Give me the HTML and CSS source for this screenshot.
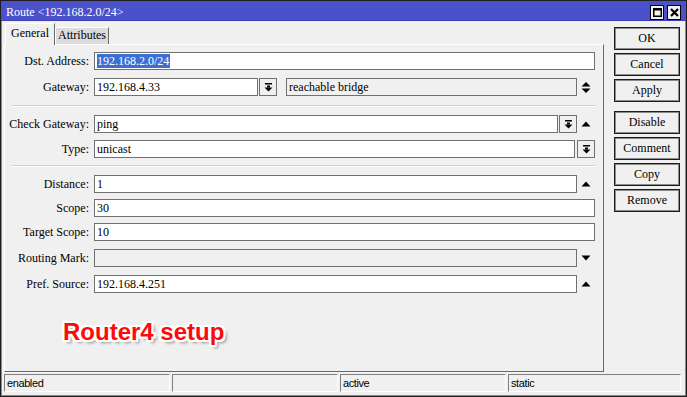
FILE: index.html
```html
<!DOCTYPE html>
<html>
<head>
<meta charset="utf-8">
<link rel="stylesheet" href="styles.css">
</head>
<body>
<div class="win">
  <div class="titlebar">
    <span class="title">Route &lt;192.168.2.0/24&gt;</span>
    <div class="tbtns">
      <span class="tbtn"><svg width="9" height="9" viewBox="0 0 9 9"><rect x="0.75" y="0.75" width="7.5" height="7.5" fill="none" stroke="#000" stroke-width="1.5"/><rect x="0" y="0" width="9" height="2.5" fill="#000"/></svg></span>
      <span class="tbtn"><svg width="9" height="9" viewBox="0 0 9 9"><path d="M1 1L8 8M8 1L1 8" stroke="#000" stroke-width="2.2"/></svg></span>
    </div>
  </div>
  <div class="body">
    <div class="main">
      <div class="tabs">
        <div class="tab active">General</div>
        <div class="tab">Attributes</div>
      </div>
      <div class="panel">
        <div class="row">
          <div class="lbl">Dst. Address:</div>
          <div class="field"><span class="sel">192.168.2.0/24</span></div>
        </div>
        <div class="row">
          <div class="lbl">Gateway:</div>
          <div class="field gw">192.168.4.33</div>
          <div class="dd dd-gw"><svg width="9" height="9" viewBox="0 0 9 9"><rect x="1" y="0" width="7" height="1.5"/><rect x="3" y="2.5" width="3" height="2"/><path d="M0.5 4.5H8.5L4.5 8.5Z"/></svg></div>
          <div class="field ro gwinfo">reachable bridge</div>
          <div class="ico"><svg width="10" height="11" viewBox="0 0 10 11"><path d="M0.5 4.5H9.5L5 0Z"/><path d="M0.5 6.5H9.5L5 11Z"/></svg></div>
        </div>
        <div class="sep s1"></div>
        <div class="row">
          <div class="lbl">Check Gateway:</div>
          <div class="field">ping</div>
          <div class="dd dd-cg"><svg width="9" height="9" viewBox="0 0 9 9"><rect x="1" y="0" width="7" height="1.5"/><rect x="3" y="2.5" width="3" height="2"/><path d="M0.5 4.5H8.5L4.5 8.5Z"/></svg></div>
          <div class="ico"><svg width="10" height="6" viewBox="0 0 10 6"><path d="M0.5 5.5H9.5L5 0.5Z"/></svg></div>
        </div>
        <div class="row t7">
          <div class="lbl">Type:</div>
          <div class="field">unicast</div>
          <div class="dd dd-ty"><svg width="9" height="9" viewBox="0 0 9 9"><rect x="1" y="0" width="7" height="1.5"/><rect x="3" y="2.5" width="3" height="2"/><path d="M0.5 4.5H8.5L4.5 8.5Z"/></svg></div>
        </div>
        <div class="sep s2"></div>
        <div class="row">
          <div class="lbl">Distance:</div>
          <div class="field">1</div>
          <div class="ico"><svg width="10" height="6" viewBox="0 0 10 6"><path d="M0.5 5.5H9.5L5 0.5Z"/></svg></div>
        </div>
        <div class="row t6">
          <div class="lbl">Scope:</div>
          <div class="field">30</div>
        </div>
        <div class="row t6">
          <div class="lbl">Target Scope:</div>
          <div class="field">10</div>
        </div>
        <div class="row">
          <div class="lbl">Routing Mark:</div>
          <div class="field ro"></div>
          <div class="ico"><svg width="10" height="6" viewBox="0 0 10 6"><path d="M0.5 0.5H9.5L5 5.5Z"/></svg></div>
        </div>
        <div class="row">
          <div class="lbl">Pref. Source:</div>
          <div class="field">192.168.4.251</div>
          <div class="ico"><svg width="10" height="6" viewBox="0 0 10 6"><path d="M0.5 5.5H9.5L5 0.5Z"/></svg></div>
        </div>
      </div>
    </div>
    <div class="side">
      <div class="btn">OK</div>
      <div class="btn">Cancel</div>
      <div class="btn">Apply</div>
      <div class="btn grp">Disable</div>
      <div class="btn">Comment</div>
      <div class="btn">Copy</div>
      <div class="btn">Remove</div>
    </div>
  </div>
  <div class="status">
    <div class="cell">enabled</div>
    <div class="cell"></div>
    <div class="cell">active</div>
    <div class="cell last">static</div>
  </div>
  <div class="note">Router4 setup</div>
</div>
</body>
</html>
```
FILE: styles.css
```css
html, body {
  margin: 0;
  padding: 0;
  background: #f0f0f0;
}

.win {
  position: relative;
  width: 687px;
  height: 397px;
  box-sizing: border-box;
  border: 1px solid #1e1e1e;
  box-shadow: inset -1px -1px 0 #8a8a8a, inset 1px 0 0 #8a8a8a;
  background: #f0f0f0;
  display: flex;
  flex-direction: column;
  font: 12px "Liberation Serif", "Times New Roman", serif;
  color: #000;
}

.titlebar {
  height: 20px;
  flex: none;
  background: #4b50cb;
  border-bottom: 1px solid #3a3eb0;
  box-sizing: border-box;
  display: flex;
  align-items: center;
  justify-content: space-between;
  padding: 1px 5px 0 5px;
  color: #fff;
}

.title {
  font-size: 12px;
  line-height: 14px;
  padding-top: 1px;
}

.tbtns {
  display: flex;
  gap: 3px;
  margin-top: 2px;
}

.tbtn {
  width: 12px;
  height: 13px;
  border: 1px solid #000;
  background: #f2f2f2;
  display: flex;
  align-items: center;
  justify-content: center;
}

.body {
  display: flex;
  height: 351px;
  flex: none;
}

.main {
  margin-left: 3px;
  width: 600px;
  display: flex;
  flex-direction: column;
}

.tabs {
  height: 23px;
  display: flex;
  align-items: flex-end;
  position: relative;
  z-index: 1;
}

.tab {
  box-sizing: border-box;
  height: 17px;
  padding: 0 5px;
  border-top: 1px solid #fff;
  border-left: 1px solid #fff;
  border-right: 1px solid #6a6a6a;
  background: #dcdcdc;
  line-height: 15px;
  text-align: center;
}

.tab.active {
  height: 22px;
  margin-left: 1px;
  margin-bottom: -1px;
  background: #f0f0f0;
  line-height: 19px;
  width: 50px;
  padding: 0;
}

.tab + .tab {
  width: 54px;
  padding: 0;
}

.panel {
  flex: 1;
  box-sizing: border-box;
  border-top: 1px solid #fff;
  border-left: 1px solid #fff;
  border-right: 1px solid #6a6a6a;
  border-bottom: 1px solid #6a6a6a;
  padding: 7px 8px 0 0;
  display: flex;
  flex-direction: column;
}

.row {
  display: flex;
  align-items: center;
  height: 18px;
  flex: none;
}

.row + .row {
  margin-top: 8px;
}

.row.t7 {
  margin-top: 7px;
}

.row.t6 {
  margin-top: 6px;
}

.lbl {
  width: 84px;
  flex: none;
  text-align: right;
  margin-right: 5px;
  white-space: nowrap;
}

.field {
  flex: 1;
  min-width: 0;
  height: 18px;
  box-sizing: border-box;
  border: 1px solid #707070;
  background: #fff;
  padding-left: 2px;
  line-height: 16px;
  white-space: nowrap;
  overflow: hidden;
}

.field.ro {
  background: #f0f0f0;
}

.field.gw {
  flex: none;
  width: 164px;
}

.field.gwinfo {
  margin-left: 9px;
}

.sel {
  background: #3b6fd3;
  color: #fff;
  padding: 0 1px 0 0;
}

.dd {
  flex: none;
  width: 18px;
  height: 18px;
  box-sizing: border-box;
  border: 1px solid #707070;
  background: #f0f0f0;
  display: flex;
  align-items: center;
  justify-content: center;
}

.dd-gw {
  margin-left: 1px;
}

.dd-cg {
  margin-left: 1px;
}

.dd-ty {
  margin-left: 2px;
}

.ico {
  flex: none;
  width: 18px;
  height: 18px;
  display: flex;
  align-items: center;
  justify-content: center;
}

.sep {
  flex: none;
  height: 1px;
  margin-left: 7px;
  background: #cfcfcf;
  border-bottom: 1px solid #fff;
}

.sep.s1 {
  margin-top: 9px;
  margin-bottom: 8px;
}

.sep.s2 {
  margin-top: 7px;
  margin-bottom: 8px;
}

.sep + .row {
  margin-top: 0;
}

.side {
  margin-left: 10px;
  width: 66px;
  padding-top: 6px;
  display: flex;
  flex-direction: column;
  gap: 3px;
}

.btn {
  height: 23px;
  box-sizing: border-box;
  border: 1px solid #1c1c1c;
  box-shadow: inset 0 0 0 1px #8c8c8c;
  background: #f0f0f0;
  text-align: center;
  line-height: 21px;
}

.btn.grp {
  margin-top: 6px;
}

.status {
  display: flex;
  gap: 2px;
  padding: 2px 5px 0 3px;
  flex: none;
}

.cell {
  width: 166px;
  height: 18px;
  box-sizing: border-box;
  border-top: 1px solid #808080;
  border-left: 1px solid #808080;
  border-bottom: 1px solid #fff;
  border-right: 1px solid #fff;
  padding-left: 2px;
  font: 11px/16px "Liberation Sans", Arial, sans-serif;
  letter-spacing: -0.4px;
}

.cell.last {
  flex: 1;
  width: auto;
}

.note {
  position: absolute;
  left: 62px;
  top: 319px;
  font: bold 24px/24px "Liberation Sans", Arial, sans-serif;
  color: #ff0a0a;
  white-space: nowrap;
  text-shadow:
    1px 0 0 #fff, -1px 0 0 #fff, 0 1px 0 #fff, 0 -1px 0 #fff,
    2px 0 0 #fff, -2px 0 0 #fff, 0 2px 0 #fff, 0 -2px 0 #fff,
    1px 1px 0 #fff, -1px -1px 0 #fff, 1px -1px 0 #fff, -1px 1px 0 #fff,
    2px 2px 0 #fff, -2px -2px 0 #fff, 2px -2px 0 #fff, -2px 2px 0 #fff,
    3px 3px 3px rgba(0, 0, 0, 0.45);
}
```
